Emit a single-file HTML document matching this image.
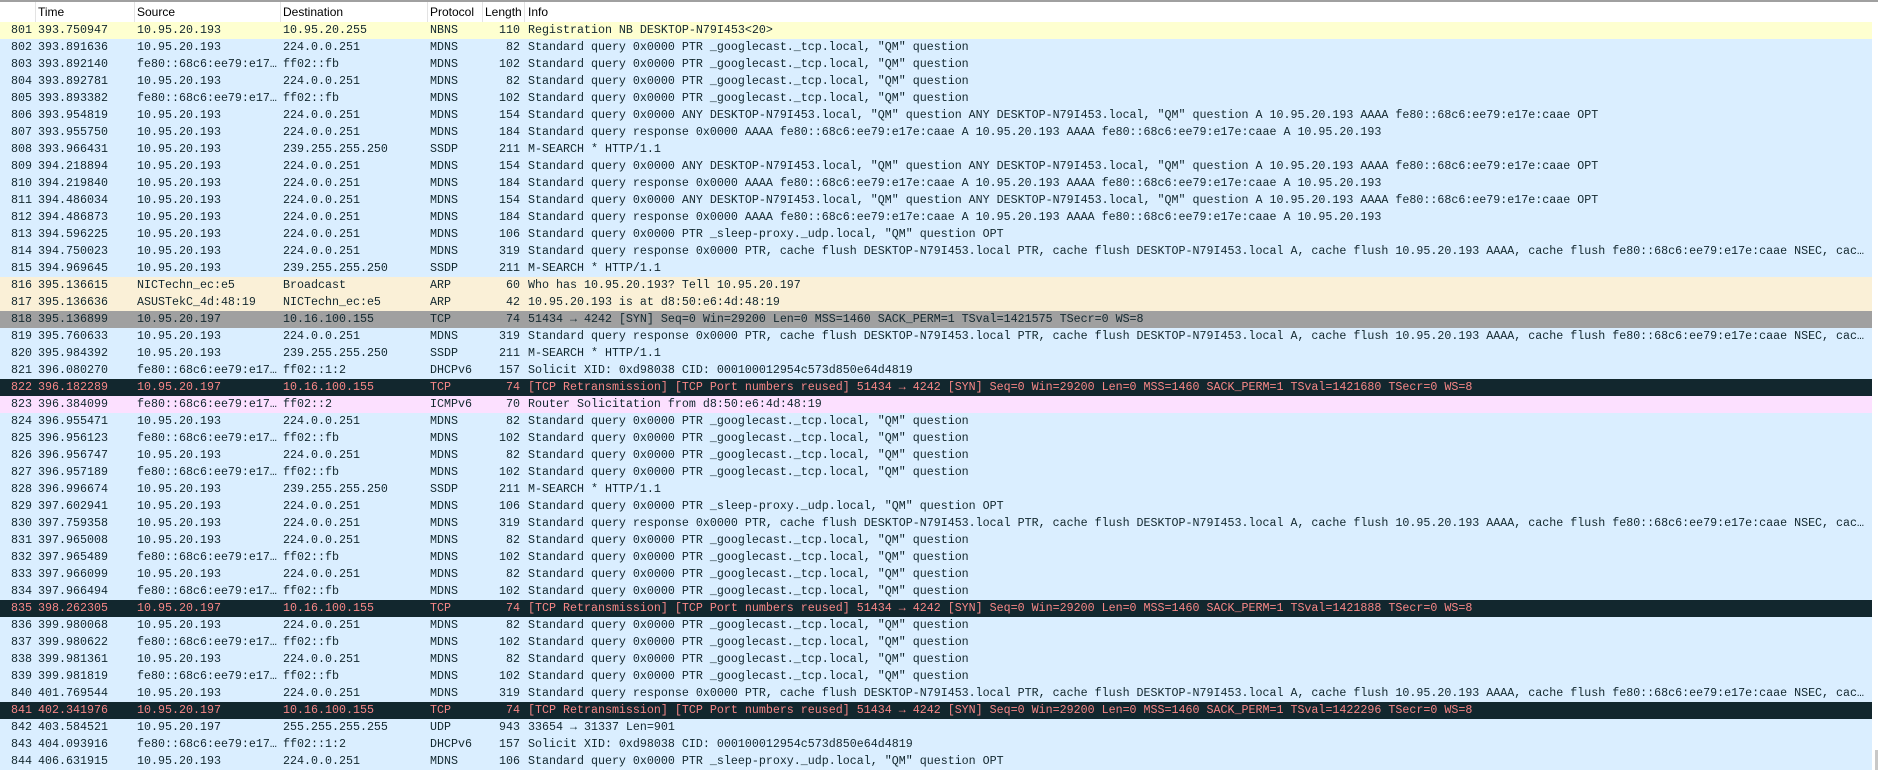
<!DOCTYPE html>
<html><head><meta charset="utf-8"><style>
body{margin:0;width:1878px;height:778px;overflow:hidden;background:#fff;position:relative}
#top{position:absolute;left:0;top:0;width:1878px;height:2px;background:#a0a0a0}
#hdr{position:absolute;left:0;top:2px;width:1872px;height:20px;background:#fff;font:12px "Liberation Sans",sans-serif;color:#000}
#hdr span{position:absolute;top:3px}
#hdr i{position:absolute;top:0;width:1px;height:20px;background:#e3e3e3}
.r{position:absolute;left:0;width:1872px;height:17px;font:11.67px/17px "Liberation Mono",monospace;color:#12272e;white-space:nowrap}
.r span{position:absolute;top:0;overflow:hidden}
.n{left:0;width:32px;text-align:right}
.t{left:38px}
.s{left:137px;width:144px}
.d{left:283px}
.p{left:430px}
.l{left:482px;width:38px;text-align:right}
.i{left:528px;width:1340px;text-overflow:ellipsis}
.y{background:#feffd0}.b{background:#daeeff}.a{background:#faf0d7}.g{background:#a0a0a0}.k{background:#12272e;color:#f78787}.m{background:#fce0ff}
#sb{position:absolute;left:1873px;top:22px;width:5px;height:756px;background:#fff}
#sbt{position:absolute;left:1875px;top:750px;width:3px;height:20px;background:#c8c8c8}
</style></head><body>
<div id="top"></div>
<div id="hdr"><span style="left:38px">Time</span><span style="left:137px">Source</span><span style="left:283px">Destination</span><span style="left:430px">Protocol</span><span style="left:485px">Length</span><span style="left:528px">Info</span>
<i style="left:35px"></i><i style="left:134px"></i><i style="left:280px"></i><i style="left:427px"></i><i style="left:482px"></i><i style="left:524px"></i></div>
<div id="sb"></div><div id="sbt"></div>
<div style="position:absolute;left:0;top:22px">
<div class="r y" style="top:0px"><span class="n">801</span><span class="t">393.750947</span><span class="s">10.95.20.193</span><span class="d">10.95.20.255</span><span class="p">NBNS</span><span class="l">110</span><span class="i">Registration NB DESKTOP-N79I453&lt;20&gt;</span></div>
<div class="r b" style="top:17px"><span class="n">802</span><span class="t">393.891636</span><span class="s">10.95.20.193</span><span class="d">224.0.0.251</span><span class="p">MDNS</span><span class="l">82</span><span class="i">Standard query 0x0000 PTR _googlecast._tcp.local, "QM" question</span></div>
<div class="r b" style="top:34px"><span class="n">803</span><span class="t">393.892140</span><span class="s">fe80::68c6:ee79:e17…</span><span class="d">ff02::fb</span><span class="p">MDNS</span><span class="l">102</span><span class="i">Standard query 0x0000 PTR _googlecast._tcp.local, "QM" question</span></div>
<div class="r b" style="top:51px"><span class="n">804</span><span class="t">393.892781</span><span class="s">10.95.20.193</span><span class="d">224.0.0.251</span><span class="p">MDNS</span><span class="l">82</span><span class="i">Standard query 0x0000 PTR _googlecast._tcp.local, "QM" question</span></div>
<div class="r b" style="top:68px"><span class="n">805</span><span class="t">393.893382</span><span class="s">fe80::68c6:ee79:e17…</span><span class="d">ff02::fb</span><span class="p">MDNS</span><span class="l">102</span><span class="i">Standard query 0x0000 PTR _googlecast._tcp.local, "QM" question</span></div>
<div class="r b" style="top:85px"><span class="n">806</span><span class="t">393.954819</span><span class="s">10.95.20.193</span><span class="d">224.0.0.251</span><span class="p">MDNS</span><span class="l">154</span><span class="i">Standard query 0x0000 ANY DESKTOP-N79I453.local, "QM" question ANY DESKTOP-N79I453.local, "QM" question A 10.95.20.193 AAAA fe80::68c6:ee79:e17e:caae OPT</span></div>
<div class="r b" style="top:102px"><span class="n">807</span><span class="t">393.955750</span><span class="s">10.95.20.193</span><span class="d">224.0.0.251</span><span class="p">MDNS</span><span class="l">184</span><span class="i">Standard query response 0x0000 AAAA fe80::68c6:ee79:e17e:caae A 10.95.20.193 AAAA fe80::68c6:ee79:e17e:caae A 10.95.20.193</span></div>
<div class="r b" style="top:119px"><span class="n">808</span><span class="t">393.966431</span><span class="s">10.95.20.193</span><span class="d">239.255.255.250</span><span class="p">SSDP</span><span class="l">211</span><span class="i">M-SEARCH * HTTP/1.1</span></div>
<div class="r b" style="top:136px"><span class="n">809</span><span class="t">394.218894</span><span class="s">10.95.20.193</span><span class="d">224.0.0.251</span><span class="p">MDNS</span><span class="l">154</span><span class="i">Standard query 0x0000 ANY DESKTOP-N79I453.local, "QM" question ANY DESKTOP-N79I453.local, "QM" question A 10.95.20.193 AAAA fe80::68c6:ee79:e17e:caae OPT</span></div>
<div class="r b" style="top:153px"><span class="n">810</span><span class="t">394.219840</span><span class="s">10.95.20.193</span><span class="d">224.0.0.251</span><span class="p">MDNS</span><span class="l">184</span><span class="i">Standard query response 0x0000 AAAA fe80::68c6:ee79:e17e:caae A 10.95.20.193 AAAA fe80::68c6:ee79:e17e:caae A 10.95.20.193</span></div>
<div class="r b" style="top:170px"><span class="n">811</span><span class="t">394.486034</span><span class="s">10.95.20.193</span><span class="d">224.0.0.251</span><span class="p">MDNS</span><span class="l">154</span><span class="i">Standard query 0x0000 ANY DESKTOP-N79I453.local, "QM" question ANY DESKTOP-N79I453.local, "QM" question A 10.95.20.193 AAAA fe80::68c6:ee79:e17e:caae OPT</span></div>
<div class="r b" style="top:187px"><span class="n">812</span><span class="t">394.486873</span><span class="s">10.95.20.193</span><span class="d">224.0.0.251</span><span class="p">MDNS</span><span class="l">184</span><span class="i">Standard query response 0x0000 AAAA fe80::68c6:ee79:e17e:caae A 10.95.20.193 AAAA fe80::68c6:ee79:e17e:caae A 10.95.20.193</span></div>
<div class="r b" style="top:204px"><span class="n">813</span><span class="t">394.596225</span><span class="s">10.95.20.193</span><span class="d">224.0.0.251</span><span class="p">MDNS</span><span class="l">106</span><span class="i">Standard query 0x0000 PTR _sleep-proxy._udp.local, "QM" question OPT</span></div>
<div class="r b" style="top:221px"><span class="n">814</span><span class="t">394.750023</span><span class="s">10.95.20.193</span><span class="d">224.0.0.251</span><span class="p">MDNS</span><span class="l">319</span><span class="i">Standard query response 0x0000 PTR, cache flush DESKTOP-N79I453.local PTR, cache flush DESKTOP-N79I453.local A, cache flush 10.95.20.193 AAAA, cache flush fe80::68c6:ee79:e17e:caae NSEC, cache flush DESKTOP</span></div>
<div class="r b" style="top:238px"><span class="n">815</span><span class="t">394.969645</span><span class="s">10.95.20.193</span><span class="d">239.255.255.250</span><span class="p">SSDP</span><span class="l">211</span><span class="i">M-SEARCH * HTTP/1.1</span></div>
<div class="r a" style="top:255px"><span class="n">816</span><span class="t">395.136615</span><span class="s">NICTechn_ec:e5</span><span class="d">Broadcast</span><span class="p">ARP</span><span class="l">60</span><span class="i">Who has 10.95.20.193? Tell 10.95.20.197</span></div>
<div class="r a" style="top:272px"><span class="n">817</span><span class="t">395.136636</span><span class="s">ASUSTekC_4d:48:19</span><span class="d">NICTechn_ec:e5</span><span class="p">ARP</span><span class="l">42</span><span class="i">10.95.20.193 is at d8:50:e6:4d:48:19</span></div>
<div class="r g" style="top:289px"><span class="n">818</span><span class="t">395.136899</span><span class="s">10.95.20.197</span><span class="d">10.16.100.155</span><span class="p">TCP</span><span class="l">74</span><span class="i">51434 → 4242 [SYN] Seq=0 Win=29200 Len=0 MSS=1460 SACK_PERM=1 TSval=1421575 TSecr=0 WS=8</span></div>
<div class="r b" style="top:306px"><span class="n">819</span><span class="t">395.760633</span><span class="s">10.95.20.193</span><span class="d">224.0.0.251</span><span class="p">MDNS</span><span class="l">319</span><span class="i">Standard query response 0x0000 PTR, cache flush DESKTOP-N79I453.local PTR, cache flush DESKTOP-N79I453.local A, cache flush 10.95.20.193 AAAA, cache flush fe80::68c6:ee79:e17e:caae NSEC, cache flush DESKTOP</span></div>
<div class="r b" style="top:323px"><span class="n">820</span><span class="t">395.984392</span><span class="s">10.95.20.193</span><span class="d">239.255.255.250</span><span class="p">SSDP</span><span class="l">211</span><span class="i">M-SEARCH * HTTP/1.1</span></div>
<div class="r b" style="top:340px"><span class="n">821</span><span class="t">396.080270</span><span class="s">fe80::68c6:ee79:e17…</span><span class="d">ff02::1:2</span><span class="p">DHCPv6</span><span class="l">157</span><span class="i">Solicit XID: 0xd98038 CID: 000100012954c573d850e64d4819</span></div>
<div class="r k" style="top:357px"><span class="n">822</span><span class="t">396.182289</span><span class="s">10.95.20.197</span><span class="d">10.16.100.155</span><span class="p">TCP</span><span class="l">74</span><span class="i">[TCP Retransmission] [TCP Port numbers reused] 51434 → 4242 [SYN] Seq=0 Win=29200 Len=0 MSS=1460 SACK_PERM=1 TSval=1421680 TSecr=0 WS=8</span></div>
<div class="r m" style="top:374px"><span class="n">823</span><span class="t">396.384099</span><span class="s">fe80::68c6:ee79:e17…</span><span class="d">ff02::2</span><span class="p">ICMPv6</span><span class="l">70</span><span class="i">Router Solicitation from d8:50:e6:4d:48:19</span></div>
<div class="r b" style="top:391px"><span class="n">824</span><span class="t">396.955471</span><span class="s">10.95.20.193</span><span class="d">224.0.0.251</span><span class="p">MDNS</span><span class="l">82</span><span class="i">Standard query 0x0000 PTR _googlecast._tcp.local, "QM" question</span></div>
<div class="r b" style="top:408px"><span class="n">825</span><span class="t">396.956123</span><span class="s">fe80::68c6:ee79:e17…</span><span class="d">ff02::fb</span><span class="p">MDNS</span><span class="l">102</span><span class="i">Standard query 0x0000 PTR _googlecast._tcp.local, "QM" question</span></div>
<div class="r b" style="top:425px"><span class="n">826</span><span class="t">396.956747</span><span class="s">10.95.20.193</span><span class="d">224.0.0.251</span><span class="p">MDNS</span><span class="l">82</span><span class="i">Standard query 0x0000 PTR _googlecast._tcp.local, "QM" question</span></div>
<div class="r b" style="top:442px"><span class="n">827</span><span class="t">396.957189</span><span class="s">fe80::68c6:ee79:e17…</span><span class="d">ff02::fb</span><span class="p">MDNS</span><span class="l">102</span><span class="i">Standard query 0x0000 PTR _googlecast._tcp.local, "QM" question</span></div>
<div class="r b" style="top:459px"><span class="n">828</span><span class="t">396.996674</span><span class="s">10.95.20.193</span><span class="d">239.255.255.250</span><span class="p">SSDP</span><span class="l">211</span><span class="i">M-SEARCH * HTTP/1.1</span></div>
<div class="r b" style="top:476px"><span class="n">829</span><span class="t">397.602941</span><span class="s">10.95.20.193</span><span class="d">224.0.0.251</span><span class="p">MDNS</span><span class="l">106</span><span class="i">Standard query 0x0000 PTR _sleep-proxy._udp.local, "QM" question OPT</span></div>
<div class="r b" style="top:493px"><span class="n">830</span><span class="t">397.759358</span><span class="s">10.95.20.193</span><span class="d">224.0.0.251</span><span class="p">MDNS</span><span class="l">319</span><span class="i">Standard query response 0x0000 PTR, cache flush DESKTOP-N79I453.local PTR, cache flush DESKTOP-N79I453.local A, cache flush 10.95.20.193 AAAA, cache flush fe80::68c6:ee79:e17e:caae NSEC, cache flush DESKTOP</span></div>
<div class="r b" style="top:510px"><span class="n">831</span><span class="t">397.965008</span><span class="s">10.95.20.193</span><span class="d">224.0.0.251</span><span class="p">MDNS</span><span class="l">82</span><span class="i">Standard query 0x0000 PTR _googlecast._tcp.local, "QM" question</span></div>
<div class="r b" style="top:527px"><span class="n">832</span><span class="t">397.965489</span><span class="s">fe80::68c6:ee79:e17…</span><span class="d">ff02::fb</span><span class="p">MDNS</span><span class="l">102</span><span class="i">Standard query 0x0000 PTR _googlecast._tcp.local, "QM" question</span></div>
<div class="r b" style="top:544px"><span class="n">833</span><span class="t">397.966099</span><span class="s">10.95.20.193</span><span class="d">224.0.0.251</span><span class="p">MDNS</span><span class="l">82</span><span class="i">Standard query 0x0000 PTR _googlecast._tcp.local, "QM" question</span></div>
<div class="r b" style="top:561px"><span class="n">834</span><span class="t">397.966494</span><span class="s">fe80::68c6:ee79:e17…</span><span class="d">ff02::fb</span><span class="p">MDNS</span><span class="l">102</span><span class="i">Standard query 0x0000 PTR _googlecast._tcp.local, "QM" question</span></div>
<div class="r k" style="top:578px"><span class="n">835</span><span class="t">398.262305</span><span class="s">10.95.20.197</span><span class="d">10.16.100.155</span><span class="p">TCP</span><span class="l">74</span><span class="i">[TCP Retransmission] [TCP Port numbers reused] 51434 → 4242 [SYN] Seq=0 Win=29200 Len=0 MSS=1460 SACK_PERM=1 TSval=1421888 TSecr=0 WS=8</span></div>
<div class="r b" style="top:595px"><span class="n">836</span><span class="t">399.980068</span><span class="s">10.95.20.193</span><span class="d">224.0.0.251</span><span class="p">MDNS</span><span class="l">82</span><span class="i">Standard query 0x0000 PTR _googlecast._tcp.local, "QM" question</span></div>
<div class="r b" style="top:612px"><span class="n">837</span><span class="t">399.980622</span><span class="s">fe80::68c6:ee79:e17…</span><span class="d">ff02::fb</span><span class="p">MDNS</span><span class="l">102</span><span class="i">Standard query 0x0000 PTR _googlecast._tcp.local, "QM" question</span></div>
<div class="r b" style="top:629px"><span class="n">838</span><span class="t">399.981361</span><span class="s">10.95.20.193</span><span class="d">224.0.0.251</span><span class="p">MDNS</span><span class="l">82</span><span class="i">Standard query 0x0000 PTR _googlecast._tcp.local, "QM" question</span></div>
<div class="r b" style="top:646px"><span class="n">839</span><span class="t">399.981819</span><span class="s">fe80::68c6:ee79:e17…</span><span class="d">ff02::fb</span><span class="p">MDNS</span><span class="l">102</span><span class="i">Standard query 0x0000 PTR _googlecast._tcp.local, "QM" question</span></div>
<div class="r b" style="top:663px"><span class="n">840</span><span class="t">401.769544</span><span class="s">10.95.20.193</span><span class="d">224.0.0.251</span><span class="p">MDNS</span><span class="l">319</span><span class="i">Standard query response 0x0000 PTR, cache flush DESKTOP-N79I453.local PTR, cache flush DESKTOP-N79I453.local A, cache flush 10.95.20.193 AAAA, cache flush fe80::68c6:ee79:e17e:caae NSEC, cache flush DESKTOP</span></div>
<div class="r k" style="top:680px"><span class="n">841</span><span class="t">402.341976</span><span class="s">10.95.20.197</span><span class="d">10.16.100.155</span><span class="p">TCP</span><span class="l">74</span><span class="i">[TCP Retransmission] [TCP Port numbers reused] 51434 → 4242 [SYN] Seq=0 Win=29200 Len=0 MSS=1460 SACK_PERM=1 TSval=1422296 TSecr=0 WS=8</span></div>
<div class="r b" style="top:697px"><span class="n">842</span><span class="t">403.584521</span><span class="s">10.95.20.197</span><span class="d">255.255.255.255</span><span class="p">UDP</span><span class="l">943</span><span class="i">33654 → 31337 Len=901</span></div>
<div class="r b" style="top:714px"><span class="n">843</span><span class="t">404.093916</span><span class="s">fe80::68c6:ee79:e17…</span><span class="d">ff02::1:2</span><span class="p">DHCPv6</span><span class="l">157</span><span class="i">Solicit XID: 0xd98038 CID: 000100012954c573d850e64d4819</span></div>
<div class="r b" style="top:731px"><span class="n">844</span><span class="t">406.631915</span><span class="s">10.95.20.193</span><span class="d">224.0.0.251</span><span class="p">MDNS</span><span class="l">106</span><span class="i">Standard query 0x0000 PTR _sleep-proxy._udp.local, "QM" question OPT</span></div>
</div>
</body></html>
